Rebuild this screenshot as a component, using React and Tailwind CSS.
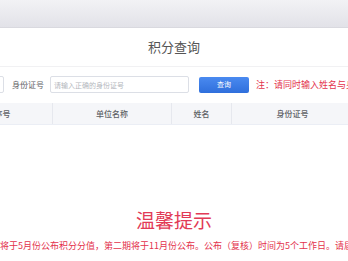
import React from "react";

const cols = [
  { label: "序号", w: "w-[100px]" },
  { label: "单位名称", w: "w-[119px]" },
  { label: "姓名", w: "w-[60px]" },
  { label: "身份证号", w: "w-[121px]" },
];

export default function App() {
  return (
    <div className="w-[348px] h-[261px] overflow-hidden bg-white font-['Noto_Sans_CJK_SC','Noto_Sans',sans-serif]">
      {/* top band */}
      <div className="h-[28px] bg-gradient-to-b from-[#f2f2f5] to-[#e2e2e8] border-b border-[#d9d9df]" />

      {/* title */}
      <div className="h-[39px] flex items-center justify-center text-[13px] text-[#555] border-b border-[#f1f1f3]">
        积分查询
      </div>

      {/* search row */}
      <div className="flex items-center mt-[9px] h-[17px] whitespace-nowrap">
        <div className="-ml-[100px] w-[104px] h-full shrink-0 border border-[#dcdfe6] rounded-[2px]" />
        <span className="ml-[8px] text-[8px] text-[#606266] shrink-0">身份证号</span>
        <input
          readOnly
          placeholder="请输入正确的身份证号"
          className="ml-[6px] w-[139px] h-full shrink-0 border border-[#dcdfe6] rounded-[2px] px-[3px] text-[7px] placeholder:text-[#b4b7bd] outline-none"
        />
        <button className="ml-[10px] w-[50px] h-[16px] shrink-0 rounded-[2px] bg-gradient-to-b from-[#4a8af0] to-[#2f6fdc] text-white text-[7px]">
          查询
        </button>
        <span className="ml-[7px] text-[9px] text-[#e3324c] shrink-0">
          注：请同时输入姓名与身份证号查询
        </span>
      </div>

      {/* table header */}
      <div className="flex mt-[10px] h-[22px] bg-[#f5f6f9] border-b border-[#ebeef5] -ml-[47px] w-[500px]">
        {cols.map((c, i) => (
          <div
            key={c.label}
            className={`${c.w} shrink-0 flex items-center justify-center text-[8px] font-medium text-[#606266] ${
              i < cols.length - 1 ? "border-r border-[#e6e8ee]" : ""
            }`}
          >
            {c.label}
          </div>
        ))}
      </div>

      {/* tips */}
      <div className="mt-[85px] text-center text-[19px] leading-[20px] text-[#e23a56]">
        温馨提示
      </div>
      <div className="mt-[10px] whitespace-nowrap text-[9px] leading-[12px] text-[#e3324c]">
        将于5月份公布积分分值，第二期将于11月份公布。公布（复核）时间为5个工作日。请届时查询。
      </div>
    </div>
  );
}
